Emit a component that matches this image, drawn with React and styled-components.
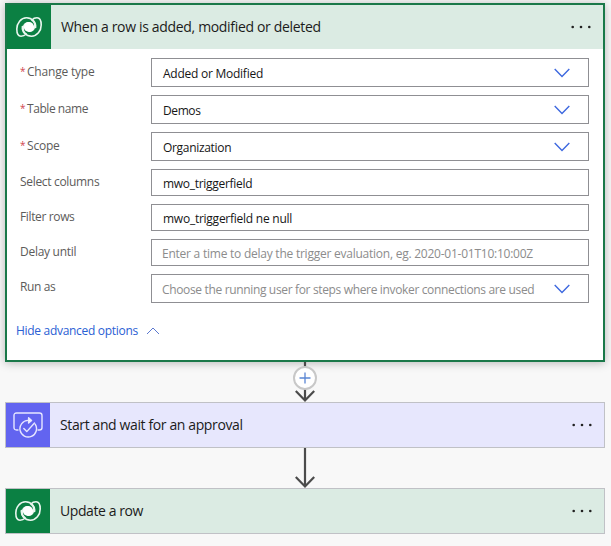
import React from "react";
import styled, { createGlobalStyle } from "styled-components";

const GlobalStyle = createGlobalStyle`
  * { box-sizing: border-box; }
  body {
    margin: 0;
    background: #f8f8f8;
    font-family: "Open Sans", "Noto Sans", sans-serif;
    overflow: hidden;
  }
`;

const Flow = styled.main`
  display: flex;
  flex-direction: column;
  width: 600px;
  margin-left: 5px;
  padding-top: 3px;
`;

const TriggerCard = styled.section`
  height: 359px;
  background: #fff;
  border: 2px solid #1a7849;
  box-shadow: 0 1px 9px rgba(0, 0, 0, 0.27);
`;

const Header = styled.header`
  display: flex;
  align-items: center;
  height: 44px;
  padding-right: 12px;
  background: #dbebe3;
`;

const StepCard = styled(Header)`
  height: 46px;
  border: 1px solid #c0c1c6;
  background: ${(p) => p.$tint};
`;

const IconTile = styled.div`
  display: flex;
  align-items: center;
  justify-content: center;
  flex: none;
  width: 44px;
  height: 44px;
  background: ${(p) => p.$color};
`;

const Title = styled.h2`
  flex: 1;
  margin: 0 0 0 10px;
  font-size: 14px;
  font-weight: 400;
  line-height: 20px;
  letter-spacing: ${(p) => p.$tracking}px;
  white-space: nowrap;
  color: #1b1b1b;
`;

const Form = styled.div`
  display: flex;
  flex-direction: column;
  gap: 8px;
  padding: 9px 14px 0 13px;
`;

const Row = styled.div`
  display: grid;
  grid-template-columns: 131px 438px;
  align-items: start;
`;

const Label = styled.label`
  display: flex;
  padding-top: ${(p) => (p.$low ? 1 : 0)}px;
  font-size: 12px;
  line-height: 26px;
  letter-spacing: ${(p) => p.$tracking}px;
  white-space: nowrap;
  color: #5c5b5a;
`;

const Required = styled.span`
  width: 7px;
  font-size: 10px;
  line-height: 25px;
  color: #d0454e;
`;

const Field = styled.div`
  display: flex;
  align-items: center;
  justify-content: space-between;
  height: ${(p) => (p.$select ? 29 : 27)}px;
  padding: 0 18px 0 ${(p) => (p.$hint ? 10 : 11)}px;
  border: 1px solid #8f8f93;
  font-size: 12px;
  line-height: 18px;
  letter-spacing: ${(p) => p.$tracking}px;
  white-space: nowrap;
  color: ${(p) => (p.$hint ? "#8c8c8c" : "#161616")};
`;

const Value = styled.span`
  padding-top: 2px;
`;

const AdvancedLink = styled.a`
  display: flex;
  align-items: center;
  gap: 8px;
  margin: 19px 0 0 9px;
  font-size: 12px;
  line-height: 18px;
  letter-spacing: -0.3px;
  color: #2a60d4;
`;

const Connector = styled.div`
  display: flex;
  justify-content: center;
  height: 40px;
`;

const Svg = styled.svg`
  display: block;
  flex: none;
`;

const fields = [
  { label: "Change type", lt: -0.2, value: "Added or Modified", vt: -0.25, required: true, select: true },
  { label: "Table name", lt: -0.44, value: "Demos", vt: -0.4, required: true, select: true },
  { label: "Scope", lt: -0.2, value: "Organization", vt: -0.31, required: true, select: true },
  { label: "Select columns", lt: -0.32, value: "mwo_triggerfield", vt: -0.29 },
  { label: "Filter rows", lt: -0.36, value: "mwo_triggerfield ne null", vt: -0.25 },
  { label: "Delay until", lt: -0.28, value: "Enter a time to delay the trigger evaluation, eg. 2020-01-01T10:10:00Z", vt: -0.24, hint: true },
  { label: "Run as", lt: -0.37, value: "Choose the running user for steps where invoker connections are used", vt: -0.345, hint: true, select: true },
];

const swoosh = "M19.6 10.5C20.2 5 16 .8 10.5 .8C5 .8 .8 6 .8 12C.8 16.5 2.3 19.2 5 19.2C7 19.2 8.8 18.4 10 17C7.5 15.3 6.6 12 7.8 9C8.8 6.6 11 5.6 13 5.8";

const DataverseIcon = () => (
  <Svg width="28" height="22" viewBox="-1 -1 28 22" fill="none" stroke="#eaf6ef" strokeWidth="1.6" strokeLinecap="round">
    <path d={swoosh} />
    <path d={swoosh} transform="rotate(180 13 10)" />
    <circle cx="13" cy="10" r="5.1" fill="#fff" stroke="none" />
  </Svg>
);

const ApprovalIcon = () => (
  <Svg width="30" height="26" viewBox="0 0 30 26" fill="none" stroke="#e6e6ff" strokeWidth="1.4" strokeLinecap="round" strokeLinejoin="round">
    <path d="M5 18H3.5Q1 18 1 15.5V3.5Q1 1 3.5 1H26.5Q29 1 29 3.5V15.5Q29 18 26.5 18H25" />
    <path d="M17 8.4H15A8.3 8.3 0 1 0 22.2 12.2" />
    <path d="M15.6 5.7L18.6 8.4L15.6 11.1Z" fill="#fff" />
    <path d="M10.8 16.6L13.8 19.6L21.5 11" />
  </Svg>
);

const Chevron = () => (
  <Svg width="16" height="10" viewBox="0 0 16 10" fill="none" stroke="#3d68df" strokeWidth="1.4">
    <path d="M.7 1L8 8.4L15.3 1" />
  </Svg>
);

const ChevronUp = () => (
  <Svg width="14" height="8" viewBox="0 0 14 8" fill="none" stroke="#5b78cf" strokeWidth="1">
    <path d="M1 7L7 1L13 7" />
  </Svg>
);

const Dots = () => (
  <Svg width="20" height="4" viewBox="0 0 20 4" fill="#222">
    <circle cx="1.7" cy="2" r="1.3" />
    <circle cx="10" cy="2" r="1.3" />
    <circle cx="18.3" cy="2" r="1.3" />
  </Svg>
);

const Arrow = ({ addable }) => (
  <Connector>
    <Svg width="26" height="40" viewBox="0 0 26 40" fill="none">
      <path d="M13 0V38M3.8 29L13 38.4L22.2 29" stroke="#4b4b4b" strokeWidth="2.2" />
      {addable && (
        <>
          <circle cx="13" cy="16" r="11" fill="#fff" stroke="#c8c8c8" strokeWidth="2" />
          <path d="M13 10.5V21.5M7.5 16H18.5" stroke="#5a86d4" strokeWidth="1.3" />
        </>
      )}
    </Svg>
  </Connector>
);

export default function App() {
  return (
    <>
      <GlobalStyle />
      <Flow>
        <TriggerCard>
          <Header>
            <IconTile $color="#0b8043"><DataverseIcon /></IconTile>
            <Title $tracking={-0.33}>When a row is added, modified or deleted</Title>
            <Dots />
          </Header>
          <Form>
            {fields.map((f) => (
              <Row key={f.label}>
                <Label $tracking={f.lt} $low={f.required}>
                  {f.required && <Required>*</Required>}
                  {f.label}
                </Label>
                <Field $select={f.select} $hint={f.hint} $tracking={f.vt}>
                  <Value>{f.value}</Value>
                  {f.select && <Chevron />}
                </Field>
              </Row>
            ))}
          </Form>
          <AdvancedLink>Hide advanced options<ChevronUp /></AdvancedLink>
        </TriggerCard>
        <Arrow addable />
        <StepCard $tint="#e7e7fd">
          <IconTile $color="#6264f0"><ApprovalIcon /></IconTile>
          <Title $tracking={-0.38}>Start and wait for an approval</Title>
          <Dots />
        </StepCard>
        <Arrow />
        <StepCard $tint="#dbebe3">
          <IconTile $color="#0b8043"><DataverseIcon /></IconTile>
          <Title $tracking={-0.42}>Update a row</Title>
          <Dots />
        </StepCard>
      </Flow>
    </>
  );
}
